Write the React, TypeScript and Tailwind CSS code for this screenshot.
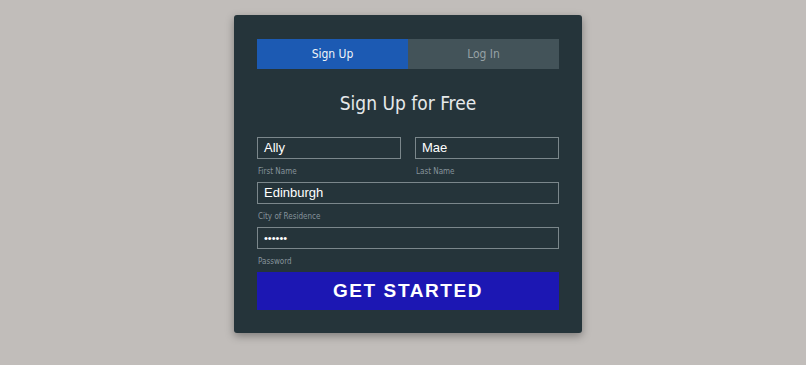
const narrow = '"DejaVu Sans Condensed", "Open Sans", sans-serif';

export default function App() {
  return (
    <div className="min-h-[365px] w-full bg-[#c1bdba] pt-[15px]" style={{ fontFamily: narrow }}>
      <div className="ml-[234px] w-[348px] rounded-[3px] bg-[#25343a] px-[23px] pt-[24px] pb-[23px] shadow-[0_3px_8px_rgba(0,0,0,0.35)]">
        <div className="flex h-[30px]">
          <div className="flex flex-1 items-center justify-center bg-[#1c5ab3] text-[12px] text-[#f0f4f8]">Sign Up</div>
          <div className="flex flex-1 items-center justify-center bg-[#435359] text-[12px] text-[#96a2a6]">Log In</div>
        </div>
        <h1 className="mt-[20px] text-center text-[19px] font-light leading-[28px] text-[#e6e9ea]">Sign Up for Free</h1>
        <div className="mt-[20px] flex gap-[14px]">
          <Field value="Ally" label="First Name" />
          <Field value="Mae" label="Last Name" />
        </div>
        <Field value="Edinburgh" label="City of Residence" />
        <Field value="••••••" label="Password" small />
        <button className="flex h-[38px] w-full items-center justify-center bg-[#1c17b3] text-[19px] font-bold tracking-[1.6px] text-white" style={{ fontFamily: '"Liberation Sans", Arial, sans-serif' }}>
          GET STARTED
        </button>
      </div>
    </div>
  );
}

function Field({ value, label, small }: { value: string; label: string; small?: boolean }) {
  return (
    <div className="flex-1">
      <div
        className={`flex h-[22px] items-center border border-[#7b878b] px-[6px] text-white ${small ? "text-[11px]" : "text-[13px]"}`}
        style={{ fontFamily: '"Liberation Sans", Arial, sans-serif' }}
      >
        {value}
      </div>
      <div className="h-[23px] pl-[1px] pt-[7px] text-[8px] leading-[12px] text-[#86939a]">{label}</div>
    </div>
  );
}
